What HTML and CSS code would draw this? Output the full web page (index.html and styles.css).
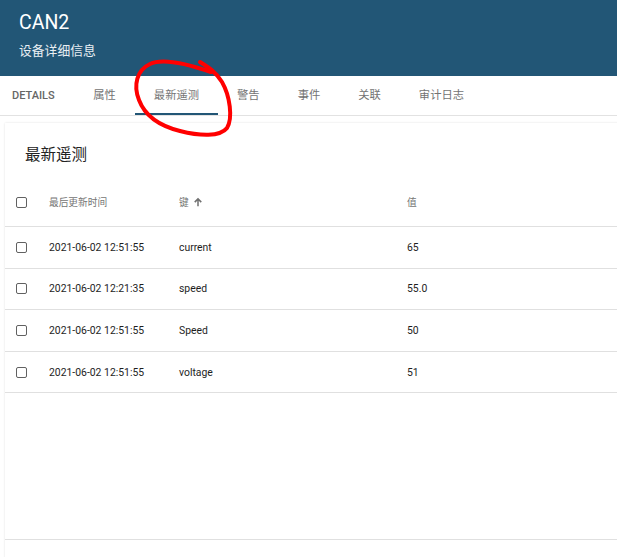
FILE: index.html
```html
<!DOCTYPE html>
<html lang="zh-CN">
<head>
<meta charset="utf-8">
<title>CAN2</title>
<link rel="stylesheet" href="styles.css">
</head>
<body>
<div class="page">
  <header class="header">
    <div class="title">CAN2</div>
    <div class="subtitle">设备详细信息</div>
  </header>
  <nav class="tabs">
    <div class="tab tab-first">DETAILS</div>
    <div class="tab">属性</div>
    <div class="tab active">最新遥测</div>
    <div class="tab">警告</div>
    <div class="tab">事件</div>
    <div class="tab">关联</div>
    <div class="tab">审计日志</div>
  </nav>
  <main class="content">
    <section class="card">
      <div class="card-title">最新遥测</div>
      <div class="table">
        <div class="row head">
          <div class="cell cb"><span class="box"></span></div>
          <div class="cell">最后更新时间</div>
          <div class="cell">键 <svg class="arrow" viewBox="0 0 10 10" width="10" height="10"><path d="M5 0.8 L1.2 4.6 L2.3 5.7 L4.25 3.75 L4.25 9.2 L5.75 9.2 L5.75 3.75 L7.7 5.7 L8.8 4.6 Z" fill="#707070"/></svg></div>
          <div class="cell">值</div>
        </div>
        <div class="row">
          <div class="cell cb"><span class="box"></span></div>
          <div class="cell">2021-06-02 12:51:55</div>
          <div class="cell">current</div>
          <div class="cell">65</div>
        </div>
        <div class="row">
          <div class="cell cb"><span class="box"></span></div>
          <div class="cell">2021-06-02 12:21:35</div>
          <div class="cell">speed</div>
          <div class="cell">55.0</div>
        </div>
        <div class="row">
          <div class="cell cb"><span class="box"></span></div>
          <div class="cell">2021-06-02 12:51:55</div>
          <div class="cell">Speed</div>
          <div class="cell">50</div>
        </div>
        <div class="row">
          <div class="cell cb"><span class="box"></span></div>
          <div class="cell">2021-06-02 12:51:55</div>
          <div class="cell">voltage</div>
          <div class="cell">51</div>
        </div>
      </div>
      <div class="spacer"></div>
      <div class="paginator"></div>
    </section>
  </main>
  <svg class="annotation" viewBox="0 0 617 557" width="617" height="557">
    <path d="M200 62 C208 67 216 72 222 82 C230 96 233 118 227 128 C220 137 200 136 180 131 C160 126 145 116 139 100 C133 85 137 70 150 64 C162 58 185 63 211 72" fill="none" stroke="#ff0000" stroke-width="4" stroke-linecap="round" stroke-linejoin="round"/>
  </svg>
</div>
</body>
</html>
```
FILE: styles.css
```css
html, body {
  margin: 0;
  padding: 0;
  background: #ffffff;
  overflow: hidden;
}
body {
  font-family: Roboto, "Noto Sans CJK SC", sans-serif;
}
.page {
  position: relative;
  width: 617px;
  height: 557px;
  overflow: hidden;
}
.header {
  background: #225676;
  height: 76px;
  box-sizing: border-box;
  padding: 12px 0 0 19px;
  color: #ffffff;
}
.title {
  font-size: 19.5px;
  line-height: 22px;
  font-weight: 400;
}
.subtitle {
  margin-top: 9px;
  font-size: 12.8px;
  line-height: 16px;
  color: #e8eef3;
}
.tabs {
  display: flex;
  height: 39px;
  border-bottom: 1px solid #e2e2e2;
}
.tab {
  padding: 0 19px;
  line-height: 39px;
  font-size: 11.3px;
  font-weight: 400;
  color: #737373;
  white-space: nowrap;
}
.tab-first {
  padding: 0 19.5px 0 12px;
  font-size: 11px;
  font-weight: 500;
  color: #666666;
}
.tab.active {
  box-shadow: inset 0 -2px 0 #225676;
  color: #777777;
}
.content {
  padding: 7px 0 0 5px;
}
.card {
  margin-right: -6px;
  background: #ffffff;
  box-shadow: 0 0 2px rgba(0, 0, 0, 0.12);
}
.card-title {
  padding: 22px 0 0 20px;
  font-size: 15.5px;
  line-height: 20px;
  color: #222222;
}
.table {
  margin-top: 13px;
}
.row {
  display: grid;
  grid-template-columns: 44px 130px 228px 1fr;
  align-items: center;
  height: 41.6px;
  border-bottom: 1px solid #e0e0e0;
  box-sizing: border-box;
  font-size: 10.4px;
  color: #1e1e1e;
}
.row.head {
  height: 49px;
  font-size: 9.7px;
  color: #757575;
}
.cell {
  display: flex;
  align-items: center;
  white-space: nowrap;
}
.cb {
  padding-left: 11px;
}
.box {
  width: 11px;
  height: 11px;
  box-sizing: border-box;
  border: 1.5px solid #616161;
  border-radius: 2px;
}
.arrow {
  margin-left: 4px;
}
.spacer {
  height: 146px;
}
.paginator {
  height: 40px;
  border-top: 1px solid #e0e0e0;
}
.annotation {
  position: absolute;
  left: 0;
  top: 0;
  pointer-events: none;
}
```
